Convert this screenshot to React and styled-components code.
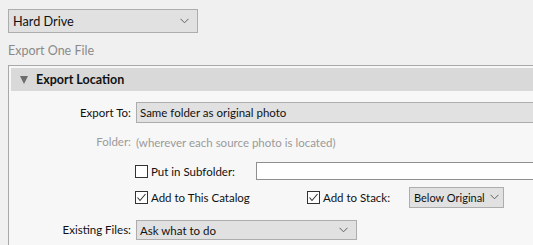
import React from "react";
import styled, { createGlobalStyle } from "styled-components";

const Global = createGlobalStyle`
  html, body { margin: 0; padding: 0; background: #f0f0f0; overflow: hidden; }
  body { font-family: Lato, "Noto Sans", sans-serif; font-size: 11.5px; color: #111; }
`;

const Page = styled.div`
  width: 533px;
  height: 245px;
  padding: 9px 0 0 8px;
  box-sizing: border-box;
  overflow: hidden;
`;

const Select = styled.div`
  box-sizing: border-box;
  width: ${(p) => p.$w};
  height: ${(p) => p.$h || 20}px;
  background: #e1e1e1;
  border: 1px solid #adadad;
  display: flex;
  align-items: center;
  justify-content: space-between;
  padding: 0 ${(p) => p.$pr || 8}px 0 ${(p) => p.$pl || 3}px;
  font-size: ${(p) => p.$fs || 11.5}px;
  color: #111;
  white-space: nowrap;
  flex: none;
`;

const Chevron = () => (
  <svg width="9" height="6" viewBox="0 0 9 6">
    <polyline points="0.5,0.8 4.5,4.8 8.5,0.8" fill="none" stroke="#606060" strokeWidth="1" />
  </svg>
);

const Caption = styled.div`
  margin-top: 10px;
  color: #8a8a8a;
  font-size: 12.5px;
  line-height: 15px;
`;

const Panel = styled.div`
  margin-top: 7px;
  width: 620px;
  height: 200px;
  border: 1px solid #a8a8a8;
  border-right: none;
  background: #f7f7f7;
  padding: 2px;
  box-sizing: border-box;
`;

const Header = styled.div`
  height: 23px;
  background: #d9d9d9;
  display: flex;
  align-items: center;
  padding-left: 9px;
  gap: 8px;
  font-weight: 700;
  font-size: 12.5px;
`;

const Triangle = styled.span`
  width: 0;
  height: 0;
  border-left: 4.5px solid transparent;
  border-right: 4.5px solid transparent;
  border-top: 8px solid #6c6c6c;
`;

const Body = styled.div`
  display: grid;
  grid-template-columns: 120px 1fr;
  column-gap: 5px;
  padding-top: 11px;
`;

const Label = styled.div`
  text-align: right;
  margin-top: ${(p) => p.$mt || 0}px;
  height: ${(p) => p.$h}px;
  line-height: ${(p) => p.$h}px;
  color: ${(p) => (p.$muted ? "#9a9a9a" : "#111")};
  white-space: nowrap;
`;

const Field = styled.div`
  display: flex;
  align-items: center;
  margin-top: ${(p) => p.$mt || 0}px;
  height: ${(p) => p.$h}px;
  margin-left: ${(p) => p.$ml || 0}px;
  color: ${(p) => (p.$muted ? "#9a9a9a" : "#111")};
  white-space: nowrap;
`;

const CheckLabel = styled.label`
  display: flex;
  align-items: center;
  gap: 3px;
  width: ${(p) => (p.$w ? p.$w + "px" : "auto")};
  flex: none;
`;

const Box = styled.span`
  box-sizing: border-box;
  width: 13px;
  height: 13px;
  border: 1px solid #333;
  background: #fff;
  display: flex;
  align-items: center;
  justify-content: center;
`;

const Check = ({ checked }) => (
  <Box>
    {checked && (
      <svg width="11" height="11" viewBox="0 0 11 11">
        <polyline points="1.5,5.5 4,8.5 9.5,2" fill="none" stroke="#333" strokeWidth="1.1" />
      </svg>
    )}
  </Box>
);

const TextInput = styled.div`
  box-sizing: border-box;
  height: 18px;
  width: 400px;
  background: #fff;
  border: 1px solid #8f8f8f;
  flex: none;
`;

export default function App() {
  return (
    <Page>
      <Global />
      <Select $w="190px" $h={24} $fs={12.7} $pl={4}>
        <span>Hard Drive</span>
        <Chevron />
      </Select>
      <Caption>Export One File</Caption>
      <Panel>
        <Header>
          <Triangle />
          <span>Export Location</span>
        </Header>
        <Body>
          <Label $h={21}>Export To:</Label>
          <Field $h={21}>
            <Select $w="500px" $h={21}>
              <span>Same folder as original photo</span>
            </Select>
          </Field>

          <Label $h={20} $mt={9} $muted>Folder:</Label>
          <Field $h={20} $mt={9} $muted>(wherever each source photo is located)</Field>

          <Label $h={18} $mt={10} />
          <Field $h={18} $mt={10} $ml={-1}>
            <CheckLabel $w={121}>
              <Check />
              <span>Put in Subfolder:</span>
            </CheckLabel>
            <TextInput />
          </Field>

          <Label $h={20} $mt={7} />
          <Field $h={20} $mt={7} $ml={-1}>
            <CheckLabel $w={172}>
              <Check checked />
              <span>Add to This Catalog</span>
            </CheckLabel>
            <CheckLabel $w={102}>
              <Check checked />
              <span>Add to Stack:</span>
            </CheckLabel>
            <Select $w="95px" $h={21} $pr={4} $pl={4} $fs={11}>
              <span>Below Original</span>
              <Chevron />
            </Select>
          </Field>

          <Label $h={20} $mt={13}>Existing Files:</Label>
          <Field $h={20} $mt={13}>
            <Select $w="221px" $h={20}>
              <span>Ask what to do</span>
              <Chevron />
            </Select>
          </Field>
        </Body>
      </Panel>
    </Page>
  );
}
